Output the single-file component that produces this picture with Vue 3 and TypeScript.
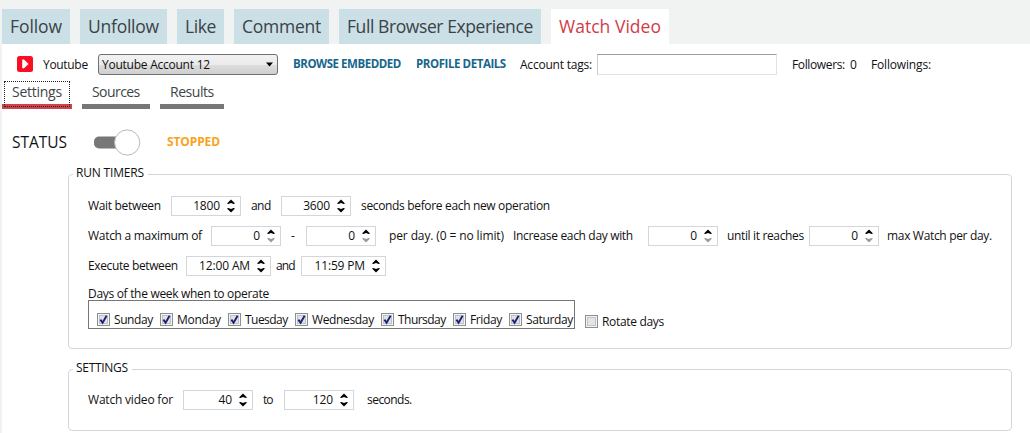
<script setup lang="ts">
import { defineComponent, h, type Directive } from 'vue'

interface Day { name: string; cls: string }

const tabs = [
  { label: 'Follow', cls: 'follow' },
  { label: 'Unfollow', cls: 'unfollow' },
  { label: 'Like', cls: 'like' },
  { label: 'Comment', cls: 'comment' },
  { label: 'Full Browser Experience', cls: 'full' },
  { label: 'Watch Video', cls: 'watch' },
]
const subTabs = [
  { label: 'Settings', cls: 'st-settings' },
  { label: 'Sources', cls: 'st-sources' },
  { label: 'Results', cls: 'st-results' },
]
const days: Day[] = [
  { name: 'Sunday', cls: 'sun' },
  { name: 'Monday', cls: 'mon' },
  { name: 'Tuesday', cls: 'tue' },
  { name: 'Wednesday', cls: 'wed' },
  { name: 'Thursday', cls: 'thu' },
  { name: 'Friday', cls: 'fri' },
  { name: 'Saturday', cls: 'sat' },
]

// Tracks a single-line label so that it fills the width of its cell.
const vFit: Directive<HTMLElement> = {
  mounted(el) {
    const range = document.createRange()
    range.selectNodeContents(el)
    const natural = range.getBoundingClientRect().width
    const style = getComputedStyle(el)
    const room = el.clientWidth - parseFloat(style.paddingLeft) - parseFloat(style.paddingRight)
    const count = (el.textContent ?? '').trim().length
    if (count > 1) el.style.letterSpacing = `${(room - natural) / (count - 0.5)}px`
  },
}

const Spin = defineComponent({
  props: { value: { type: String, required: true }, floor: Boolean },
  setup(props) {
    return () =>
      h('div', { class: 'spin' }, [
        h('span', { class: 'spin-value' }, props.value),
        h('svg', { class: 'arrows', viewBox: '0 0 8 14', width: 8, height: 14 }, [
          h('path', { d: 'M0 4.6 L4 0.6 L8 4.6 L6.6 5 L4 3.9 L1.4 5Z', fill: '#000' }),
          h('path', { d: 'M0 9.4 L4 13.4 L8 9.4 L6.6 9 L4 10.1 L1.4 9Z', fill: props.floor ? '#999' : '#000' }),
        ]),
      ])
  },
})
</script>

<template>
  <div class="window">
    <nav class="tabs">
      <div v-for="t in tabs" :key="t.cls" class="tab" :class="t.cls"><span v-fit>{{ t.label }}</span></div>
    </nav>
    <main class="page">
      <header class="account">
        <svg class="logo" viewBox="0 0 16 16" width="16" height="16">
          <rect width="16" height="16" rx="2.5" fill="#fb0d24" />
          <path d="M5.2 3.6 H7 L11.6 7.9 L7 12.3 H5.2Z" fill="#fff" />
        </svg>
        <span v-fit>Youtube</span>
        <div class="select">
          <span v-fit class="select-text">Youtube Account 12</span>
          <svg width="7" height="5" viewBox="0 0 7 5"><path d="M0 0.5H7L3.5 4.5Z" fill="#000" /></svg>
        </div>
        <b v-fit>BROWSE EMBEDDED</b>
        <b v-fit>PROFILE DETAILS</b>
        <span v-fit>Account tags:</span>
        <div class="tags"></div>
        <span v-fit>Followers:</span>
        <span>0</span>
        <span v-fit>Followings:</span>
      </header>

      <nav class="subtabs">
        <div v-for="(s, i) in subTabs" :key="s.cls" class="subtab" :class="[s.cls, { current: i === 0 }]">
          <span v-fit>{{ s.label }}</span>
        </div>
      </nav>

      <section class="status">
        <span v-fit class="status-name">STATUS</span>
        <svg width="48" height="28" viewBox="0 0 48 28">
          <rect x="1" y="8.5" width="40" height="12" rx="5" fill="#777" />
          <circle cx="34.2" cy="14.5" r="12.6" fill="#fff" stroke="#b9b9b9" />
        </svg>
        <span v-fit class="stopped">STOPPED</span>
      </section>

      <section class="group timers">
        <div class="legend"><span v-fit>RUN TIMERS</span></div>
        <div class="row wait">
          <span v-fit>Wait between</span><Spin value="1800" />
          <span v-fit>and</span><Spin value="3600" />
          <span v-fit>seconds before each new operation</span>
        </div>
        <div class="row maximum">
          <span v-fit>Watch a maximum of</span><Spin value="0" floor />
          <span>-</span><Spin value="0" floor />
          <span v-fit>per day. (0 = no limit)</span>
          <span v-fit>Increase each day with</span><Spin value="0" floor />
          <span v-fit>until it reaches</span><Spin value="0" floor />
          <span v-fit>max Watch per day.</span>
        </div>
        <div class="row execute">
          <span v-fit>Execute between</span><Spin value="12:00 AM" />
          <span v-fit>and</span><Spin value="11:59 PM" />
        </div>
        <div class="days-title"><span v-fit>Days of the week when to operate</span></div>
        <div class="days-line">
          <div class="days">
            <label v-for="d in days" :key="d.cls" class="check" :class="d.cls">
              <svg class="box" width="13" height="13" viewBox="0 0 13 13">
                <rect x="0.5" y="0.5" width="12" height="12" fill="#f4f4f4" stroke="#8e8f8f" />
                <rect x="2.5" y="2.5" width="8" height="8" fill="#dfe3e8" stroke="#bcc2cc" />
                <path d="M3.4 6.6 L5.6 9.8 L9.6 2.8" fill="none" stroke="#20206e" stroke-width="1.9" />
              </svg>
              <span v-fit>{{ d.name }}</span>
            </label>
          </div>
          <label class="check rotate">
            <svg class="box" width="13" height="13" viewBox="0 0 13 13">
              <rect x="0.5" y="0.5" width="12" height="12" fill="#f4f4f4" stroke="#8e8f8f" />
              <rect x="2.5" y="2.5" width="8" height="8" fill="#e3e4e5" stroke="#c2c5c8" />
            </svg>
            <span v-fit>Rotate days</span>
          </label>
        </div>
      </section>

      <section class="group video">
        <div class="legend short"><span v-fit>SETTINGS</span></div>
        <div class="row watching">
          <span v-fit>Watch video for</span><Spin value="40" />
          <span v-fit>to</span><Spin value="120" />
          <span v-fit>seconds.</span>
        </div>
      </section>
    </main>
  </div>
</template>

<style>
.spin {
  box-sizing: border-box;
  height: 20px;
  border: 1px solid #d3d7dc;
  background: #fff;
  display: flex;
  align-items: center;
  justify-content: flex-end;
  padding-right: 5px;
}
.spin .spin-value { margin-right: 7px; line-height: 16px; letter-spacing: -0.15px; }
.spin .arrows { display: block; }
</style>

<style scoped>
.window {
  box-sizing: border-box;
  width: 1030px;
  height: 433px;
  overflow: hidden;
  background: #f1f3f3;
  font-family: "Open Sans", "Noto Sans", sans-serif;
  font-size: 12px;
  line-height: 16px;
  color: #111;
  white-space: nowrap;
}
.window svg { display: block; }
.window span, .window b { display: block; }
.tabs { display: flex; gap: 10px; height: 44px; padding: 9px 0 0 2px; box-sizing: border-box; }
.tab {
  box-sizing: border-box;
  height: 35px;
  padding: 0 8px;
  background: #cbdfe6;
  color: #3a4347;
  font-size: 17.5px;
  line-height: 34px;
}
.follow { width: 68px; }
.unfollow { width: 87px; }
.like { width: 47px; }
.comment { width: 95px; }
.full { width: 202px; }
.watch { width: 118px; background: #fff; color: #d03c4a; }
.page { margin-left: 2px; height: 389px; background: #fff; }

.account {
  display: grid;
  grid-template-columns: 26px 55px 195px 123px 104px 77px 195px 58px 21px 60px;
  align-items: center;
  height: 40px;
  padding-left: 15px;
}
.account > span, .select-text { padding-top: 1px; }
.account > :nth-child(2) { width: 45px; }
.account > :nth-child(4) { width: 108px; }
.account > :nth-child(5) { width: 90px; }
.account > :nth-child(6) { width: 72px; }
.account > :nth-child(8) { width: 53px; }
.account b { color: #17678d; font-weight: 700; font-size: 11.5px; }
.select {
  box-sizing: border-box;
  width: 180px;
  height: 21px;
  border: 1px solid #707070;
  border-radius: 3px;
  background: linear-gradient(#f2f2f2, #ebebeb 50%, #dddddd 51%, #cfcfcf);
  display: flex;
  align-items: center;
  justify-content: space-between;
  padding: 0 4px 0 3px;
}
.select-text { width: 108px; }
.tags {
  box-sizing: border-box;
  width: 180px;
  height: 21px;
  border: 1px solid #e2e3ea;
  border-top-color: #9a9ca3;
  border-left-color: #c9cbd0;
}

.subtabs { display: flex; gap: 10px; margin-top: -3px; height: 28px; }
.subtab {
  box-sizing: border-box;
  height: 28px;
  padding: 0 10px;
  border-bottom: 5px solid #777;
  font-size: 14px;
  line-height: 21px;
  color: #3d4548;
}
.st-settings { width: 70px; }
.st-sources { width: 68px; }
.st-results { width: 64px; }
.current { border-bottom-color: #d0414c; position: relative; }
.current::after {
  content: "";
  position: absolute;
  inset: 0 2px -3px 2px;
  border: 1px dotted #222;
}

.status { display: flex; align-items: center; height: 28px; margin-top: 19px; padding-left: 10px; }
.status-name { width: 55px; font-size: 15.5px; line-height: 22px; margin-right: 26px; }
.stopped { width: 53px; margin-left: 26px; font-weight: 700; color: #faa21b; }

.group {
  box-sizing: border-box;
  width: 944px;
  margin-left: 66px;
  border: 1px solid #d0d8de;
  border-radius: 4px;
  padding-left: 19px;
}
.timers { height: 175px; margin-top: 18px; }
.video { height: 62px; margin-top: 20px; }
.legend {
  box-sizing: border-box;
  width: 75px;
  height: 16px;
  margin: -10px 0 0 -15px;
  padding: 0 4px 0 3px;
  background: #fff;
}
.legend.short { width: 59px; }
.row { display: grid; align-items: center; height: 20px; margin-bottom: 10px; }
.timers .legend { margin-bottom: 15px; }
.wait {
  grid-template-columns: 73px 70px 20px 70px 189px;
  column-gap: 10px;
}
.maximum { grid-template-columns: 123px 80px 15px 83px 124px 135px 79px 82px 78px 105px; }
.maximum > .spin { width: 70px; }
.maximum > :nth-child(1) { width: 114px; }
.maximum > :nth-child(5) { width: 115px; }
.maximum > :nth-child(6) { width: 120px; }
.maximum > :nth-child(8) { width: 77px; }
.execute { grid-template-columns: 98px 90px 25px 85px; }
.execute > .spin { width: 85px; }
.execute > :nth-child(1) { width: 90px; }
.execute > :nth-child(3) { width: 19px; }
.video .legend { margin-bottom: 14px; }
.watching { grid-template-columns: 95px 80px 21px 83px 45px; }
.watching > .spin { width: 70px; }
.watching > :nth-child(1) { width: 85px; }
.watching > :nth-child(3) { width: 10px; }

.days-title { height: 14px; }
.days-title span { width: 181px; }
.days-line { display: flex; align-items: flex-start; }
.days {
  box-sizing: border-box;
  width: 487px;
  height: 29px;
  border: 1px solid #777;
  padding: 10px 0 0 8px;
  display: flex;
}
.check { display: flex; align-items: center; height: 17px; }
.check .box { margin-right: 4px; }
.sun { width: 63px; } .sun span { width: 39px; }
.mon { width: 68px; } .mon span { width: 44px; }
.tue { width: 67px; } .tue span { width: 43px; }
.wed { width: 86px; } .wed span { width: 62px; }
.thu { width: 72px; } .thu span { width: 48px; }
.fri { width: 56px; } .fri span { width: 32px; }
.sat { width: 64px; } .sat span { width: 47px; }
.rotate { margin: 13px 0 0 10px; }
.rotate span { width: 62px; }
</style>
